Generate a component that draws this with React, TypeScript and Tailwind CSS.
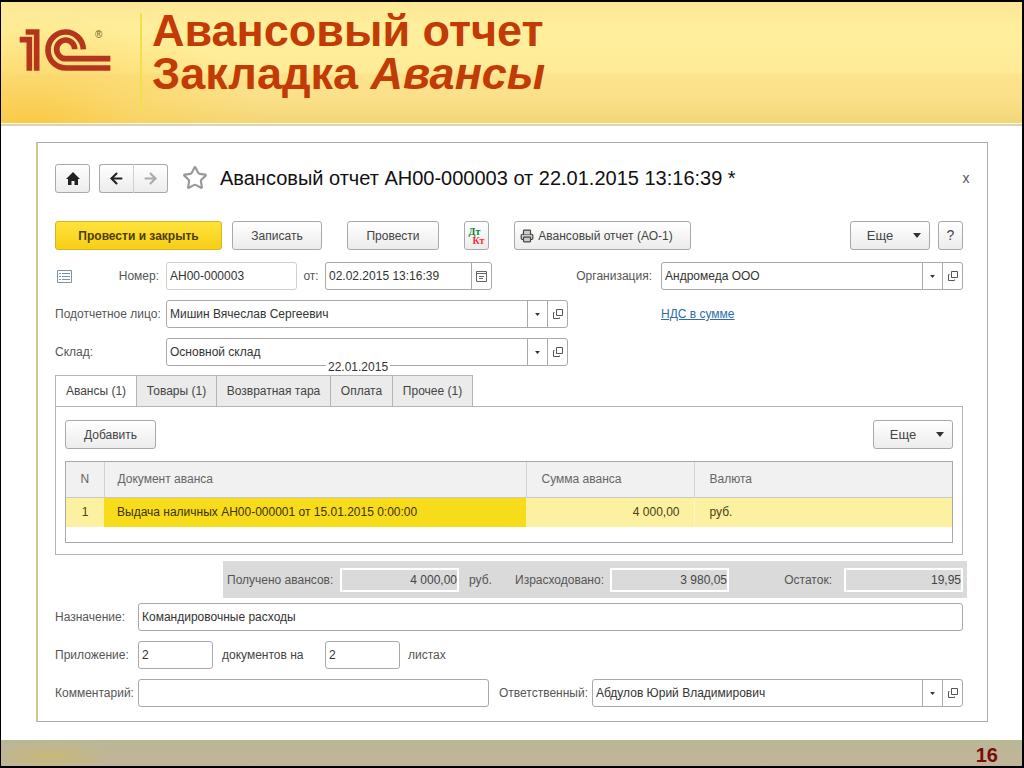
import React from 'react';
import { ArrowLeft, ArrowRight, Printer, Star } from 'lucide-react';

const boxClass = 'flex h-[28px] rounded-[3px] border border-[#a9a9a9] bg-white';
const buttonClass =
  'flex h-[29px] items-center justify-center rounded-[3px] border border-[#a9a9a9] bg-gradient-to-b from-white to-[#ececec] text-[#444]';

const Logo = () => (
  <svg width="92" height="44" viewBox="58 84 276 132" fill="none" stroke="#b5351c" strokeWidth="17" role="img" aria-label="1C">
    <path d="M78 96H111V212" />
    <path d="M60 119H89V212" />
    <path d="M251 148A53 54 0 1 0 198 204H332" />
    <path d="M225 148A27 28 0 1 0 198 176H332" />
  </svg>
);

const Caret = ({ small = false }: { small?: boolean }) => (
  <svg width={small ? 5 : 8} height={small ? 3 : 5} viewBox="0 0 8 5" fill="#333" aria-hidden="true">
    <path d="M0 0H8L4 5Z" />
  </svg>
);

const OpenIcon = () => (
  <svg width="10" height="10" viewBox="0 0 10 10" fill="none" stroke="#555" aria-hidden="true">
    <path d="M3.5 0.5H9.5V6.5H3.5ZM1.5 3.5H0.5V9.5H6.5V8.5" />
  </svg>
);

interface LookupProps {
  id: string;
  value: string;
  className: string;
}

const Lookup: React.FC<LookupProps> = ({ id, value, className }) => (
  <div className={`${boxClass} ${className}`}>
    <div className="relative min-w-0 flex-1">
      <select id={id} className="h-full w-full appearance-none bg-transparent pl-[3px] pr-5 text-[12px] text-[#333]">
        <option>{value}</option>
      </select>
      <span className="pointer-events-none absolute inset-y-0 right-0 flex w-5 items-center justify-center border-l border-[#a9a9a9]">
        <Caret small />
      </span>
    </div>
    <button type="button" aria-label="Открыть" className="flex w-5 items-center justify-center border-l border-[#a9a9a9]">
      <OpenIcon />
    </button>
  </div>
);

interface TextBoxProps {
  id: string;
  value?: string;
  className: string;
}

const TextBox: React.FC<TextBoxProps> = ({ id, value = '', className }) => (
  <input
    id={id}
    defaultValue={value}
    className={`h-[28px] min-w-0 rounded-[3px] border bg-white px-[3px] text-[12px] text-[#333] ${className}`}
  />
);

const Total: React.FC<TextBoxProps> = ({ id, value, className }) => (
  <input
    id={id}
    readOnly
    defaultValue={value}
    className={`h-6 min-w-0 border-2 border-white bg-[#dadada] text-right text-[12px] text-[#444] ${className}`}
  />
);

const tabs = [
  { name: 'Авансы (1)', width: 'w-[82px]' },
  { name: 'Товары (1)', width: 'w-[80px]' },
  { name: 'Возвратная тара', width: 'w-[114px]' },
  { name: 'Оплата', width: 'w-[62px]' },
  { name: 'Прочее (1)', width: 'w-[80px]' },
];

const SlideHeader = () => (
  <header className="flex h-[121px] bg-[radial-gradient(ellipse_240px_110px_at_30px_125px,#f9c944_0,#fbd35ca0_45%,transparent_100%),linear-gradient(to_bottom,#fde795_0,#ffef9c_25%,#ffeb97_58%,#fce38c_60%,#fbe08a_80%,#f2d678_100%)]">
    <div className="flex w-[139px] items-start pl-[18px] pt-[26px]">
      <Logo />
      <span className="-ml-4 text-[10px] leading-[14px] text-[#6b5a1c]">®</span>
    </div>
    <div className="mb-3 mt-[11px] w-[2px] bg-[#f0e04a]" />
    <h1 className="ml-[10px] mt-[7px] text-[45px] font-bold leading-[43px] text-[#c23a05]">
      Авансовый отчет
      <br />
      Закладка <em>Авансы</em>
    </h1>
  </header>
);

const TitleBar = () => (
  <div className="flex h-[28px] items-center">
    <button type="button" aria-label="Домой" className={`${buttonClass} w-[35px]`}>
      <svg width="14" height="13" viewBox="0 0 14 13" fill="#222" aria-hidden="true">
        <path d="M7 0L14 7H12V13H8.500V9H5.500V13H2V7H0Z" />
      </svg>
    </button>
    <div className="ml-[9px] flex">
      <button type="button" aria-label="Назад" className={`${buttonClass} w-[35px] rounded-r-none border-r-[#d0d0d0]`}>
        <ArrowLeft size={17} strokeWidth={3} color="#222" />
      </button>
      <button type="button" aria-label="Вперед" className={`${buttonClass} w-[34px] rounded-l-none border-l-0`}>
        <ArrowRight size={17} strokeWidth={3} color="#aaa" />
      </button>
    </div>
    <Star size={26} strokeWidth={2} strokeLinejoin="miter" color="#999" className="ml-[14px]" />
    <h2 className="ml-3 whitespace-nowrap text-[20px] text-[#111]">
      Авансовый отчет АН00-000003 от 22.01.2015 13:16:39 *
    </h2>
    <button type="button" className="ml-auto mr-[-13px] w-[20px] text-[14px] text-[#555]">x</button>
  </div>
);

const CommandBar = () => (
  <div className="mt-[29px] flex">
    <button
      type="button"
      className="flex h-[29px] w-[167px] items-center justify-center rounded-[3px] border border-[#d9b51c] bg-gradient-to-b from-[#ffe23a] to-[#f7cf12] font-bold text-[#4c3d00]"
    >
      Провести и закрыть
    </button>
    <button type="button" className={`${buttonClass} ml-[10px] w-[90px]`}>Записать</button>
    <button type="button" className={`${buttonClass} ml-[25px] w-[92px]`}>Провести</button>
    <button type="button" className={`${buttonClass} ml-[25px] w-[25px] flex-col font-['Liberation_Serif',serif]`}>
      <span className="-ml-1 text-[10px] font-bold leading-[9px] text-green-700">Дт</span>
      <span className="ml-1 text-[10px] font-bold leading-[9px] text-red-500">Кт</span>
    </button>
    <button type="button" className={`${buttonClass} ml-[25px] w-[177px] gap-1 whitespace-nowrap pr-3`}>
      <Printer size={14} color="#444" fill="#ccc" className="shrink-0" />
      Авансовый отчет (АО-1)
    </button>
    <button type="button" className={`${buttonClass} ml-auto w-[80px] gap-5 pl-2 text-[13px]`}>
      Еще
      <Caret />
    </button>
    <button type="button" className={`${buttonClass} ml-2 w-[25px] text-[14px]`}>?</button>
  </div>
);

const Fields = () => (
  <div className="mt-3 space-y-[10px]">
    <div className="flex items-center">
      <svg width="15" height="13" viewBox="0 0 15 13" fill="none" stroke="#7b93a8" className="ml-[2px]" aria-hidden="true">
        <path d="M0.500 0.500H14.500V12.500H0.500ZM2 3.500H4M5 3.500H13M2 6.500H4M5 6.500H13M2 9.500H4M5 9.500H13" />
      </svg>
      <label htmlFor="number" className="w-[94px] pr-[7px] text-right">Номер:</label>
      <TextBox id="number" value="АН00-000003" className="w-[131px] border-[#cfcfcf]" />
      <label htmlFor="date" className="w-[28px] text-center">от:</label>
      <div className={`${boxClass} w-[167px]`}>
        <input id="date" defaultValue="02.02.2015 13:16:39" className="min-w-0 flex-1 px-[3px] text-[12px] text-[#333]" />
        <button type="button" aria-label="Календарь" className="flex w-5 items-center justify-center border-l border-[#a9a9a9]">
          <svg width="11" height="11" viewBox="0 0 11 11" fill="none" stroke="#666" aria-hidden="true">
            <path d="M0.500 0.500H10.500V10.500H0.500ZM0.500 2.500H10.500M3 5.500H8M3 7.500H7" />
          </svg>
        </button>
      </div>
      <label htmlFor="company" className="ml-auto pr-[9px]">Организация:</label>
      <Lookup id="company" value="Андромеда ООО" className="w-[302px]" />
    </div>
    <div className="flex items-center">
      <label htmlFor="person" className="w-[111px] whitespace-nowrap">Подотчетное лицо:</label>
      <Lookup id="person" value="Мишин Вячеслав Сергеевич" className="w-[402px]" />
      <div className="ml-auto w-[302px]">
        <a href="#vat" className="text-[#2d6da8] underline">НДС в сумме</a>
      </div>
    </div>
    <div className="relative flex items-center">
      <label htmlFor="store" className="w-[111px]">Склад:</label>
      <Lookup id="store" value="Основной склад" className="w-[402px]" />
      <span className="absolute left-[271px] top-[22px] bg-white px-[2px] leading-[14px] text-[#333]">22.01.2015</span>
    </div>
  </div>
);

const Advances = () => (
  <section className="border border-t-0 border-[#b4b4b4] px-[9px] pb-[11px] pt-[13px]">
    <div className="flex justify-between">
      <button type="button" className={`${buttonClass} w-[91px]`}>Добавить</button>
      <button type="button" className={`${buttonClass} w-[80px] gap-5 pl-2 text-[13px]`}>
        Еще
        <Caret />
      </button>
    </div>
    <div className="mt-3 border border-[#a9a9a9] pb-[15px]">
      <table className="w-full table-fixed text-left">
        <thead className="bg-[#f1f1f1] text-[#666]">
          <tr className="h-[35px] border-b border-[#c8c8c8]">
            <th className="w-[38px] border-r border-[#d2d2d2] text-center font-normal">N</th>
            <th className="border-r border-[#d2d2d2] pl-[13px] font-normal">Документ аванса</th>
            <th className="w-[168px] border-r border-[#d2d2d2] pl-[15px] font-normal">Сумма аванса</th>
            <th className="w-[258px] pl-[15px] font-normal">Валюта</th>
          </tr>
        </thead>
        <tbody>
          <tr className="h-[30px] bg-[#fbf1a0] text-[#4a4214]">
            <td className="text-center">1</td>
            <td className="bg-[#f7dc1b] pl-[13px] text-[#3d3200]">Выдача наличных АН00-000001 от 15.01.2015 0:00:00</td>
            <td className="border-r border-[#fdf6c4] pr-[14px] text-right">4 000,00</td>
            <td className="pl-[15px]">руб.</td>
          </tr>
        </tbody>
      </table>
    </div>
  </section>
);

const Totals = () => (
  <div className="ml-[168px] mr-[-4px] mt-[6px] flex h-[37px] items-center bg-[#dadada] px-1 text-[#555]">
    <label htmlFor="received" className="w-[113px]">Получено авансов:</label>
    <Total id="received" value="4 000,00" className="w-[119px]" />
    <span className="ml-[10px] w-[46px]">руб.</span>
    <label htmlFor="spent" className="w-[95px]">Израсходовано:</label>
    <Total id="spent" value="3 980,05" className="w-[119px]" />
    <label htmlFor="rest" className="ml-auto pr-3">Остаток:</label>
    <Total id="rest" value="19,95" className="w-[119px]" />
  </div>
);

const Details = () => (
  <div className="mt-[5px] space-y-[10px]">
    <div className="flex items-center">
      <label htmlFor="purpose" className="w-[83px]">Назначение:</label>
      <TextBox id="purpose" value="Командировочные расходы" className="flex-1 border-[#a9a9a9]" />
    </div>
    <div className="flex items-center">
      <label htmlFor="docs" className="w-[83px]">Приложение:</label>
      <TextBox id="docs" value="2" className="w-[75px] border-[#a9a9a9]" />
      <label htmlFor="sheets" className="w-[112px] pl-[9px] text-[#444]">документов на</label>
      <TextBox id="sheets" value="2" className="w-[75px] border-[#a9a9a9]" />
      <span className="pl-2">листах</span>
    </div>
    <div className="flex items-center">
      <label htmlFor="comment" className="w-[83px]">Комментарий:</label>
      <TextBox id="comment" className="flex-1 border-[#a9a9a9]" />
      <label htmlFor="owner" className="w-[103px] pl-[10px]">Ответственный:</label>
      <Lookup id="owner" value="Абдулов Юрий Владимирович" className="w-[371px]" />
    </div>
  </div>
);

export default function App() {
  return (
    <div className="flex min-h-screen flex-col border-2 border-l border-black bg-white font-['Liberation_Sans',Arial,sans-serif] text-[12px] text-[#555]">
      <SlideHeader />
      <div className="h-[3px] border-b-2 border-[#d8d4bb] bg-[#fffbd8]" />
      <main className="mb-[18px] ml-[35px] mr-[34px] mt-4 flex-1 border border-l-2 border-[#a8aeb0] border-l-[#cfc98a] pb-[14px] pl-[17px] pr-6 pt-[21px]">
        <TitleBar />
        <CommandBar />
        <Fields />
        <nav className="mt-[9px] flex border-b border-[#b4b4b4]" role="tablist">
          {tabs.map((tab, i) => (
            <button
              key={tab.name}
              type="button"
              role="tab"
              aria-selected={i === 0}
              className={`h-[31px] border-r border-t border-[#b4b4b4] ${tab.width} ${i === 0 ? '-mb-px border-l bg-white' : 'bg-[#ebebeb]'} text-[#444]`}
            >
              {tab.name}
            </button>
          ))}
        </nav>
        <Advances />
        <Totals />
        <Details />
      </main>
      <footer className="flex h-[26px] items-end justify-end bg-[radial-gradient(ellipse_60px_14px_at_50px_16px,#c8b878,transparent),linear-gradient(to_bottom,#b9b797,#c2b596)] pr-6">
        <span className="text-[20px] font-bold leading-[22px] text-[#7a0c0c]">16</span>
      </footer>
    </div>
  );
}
